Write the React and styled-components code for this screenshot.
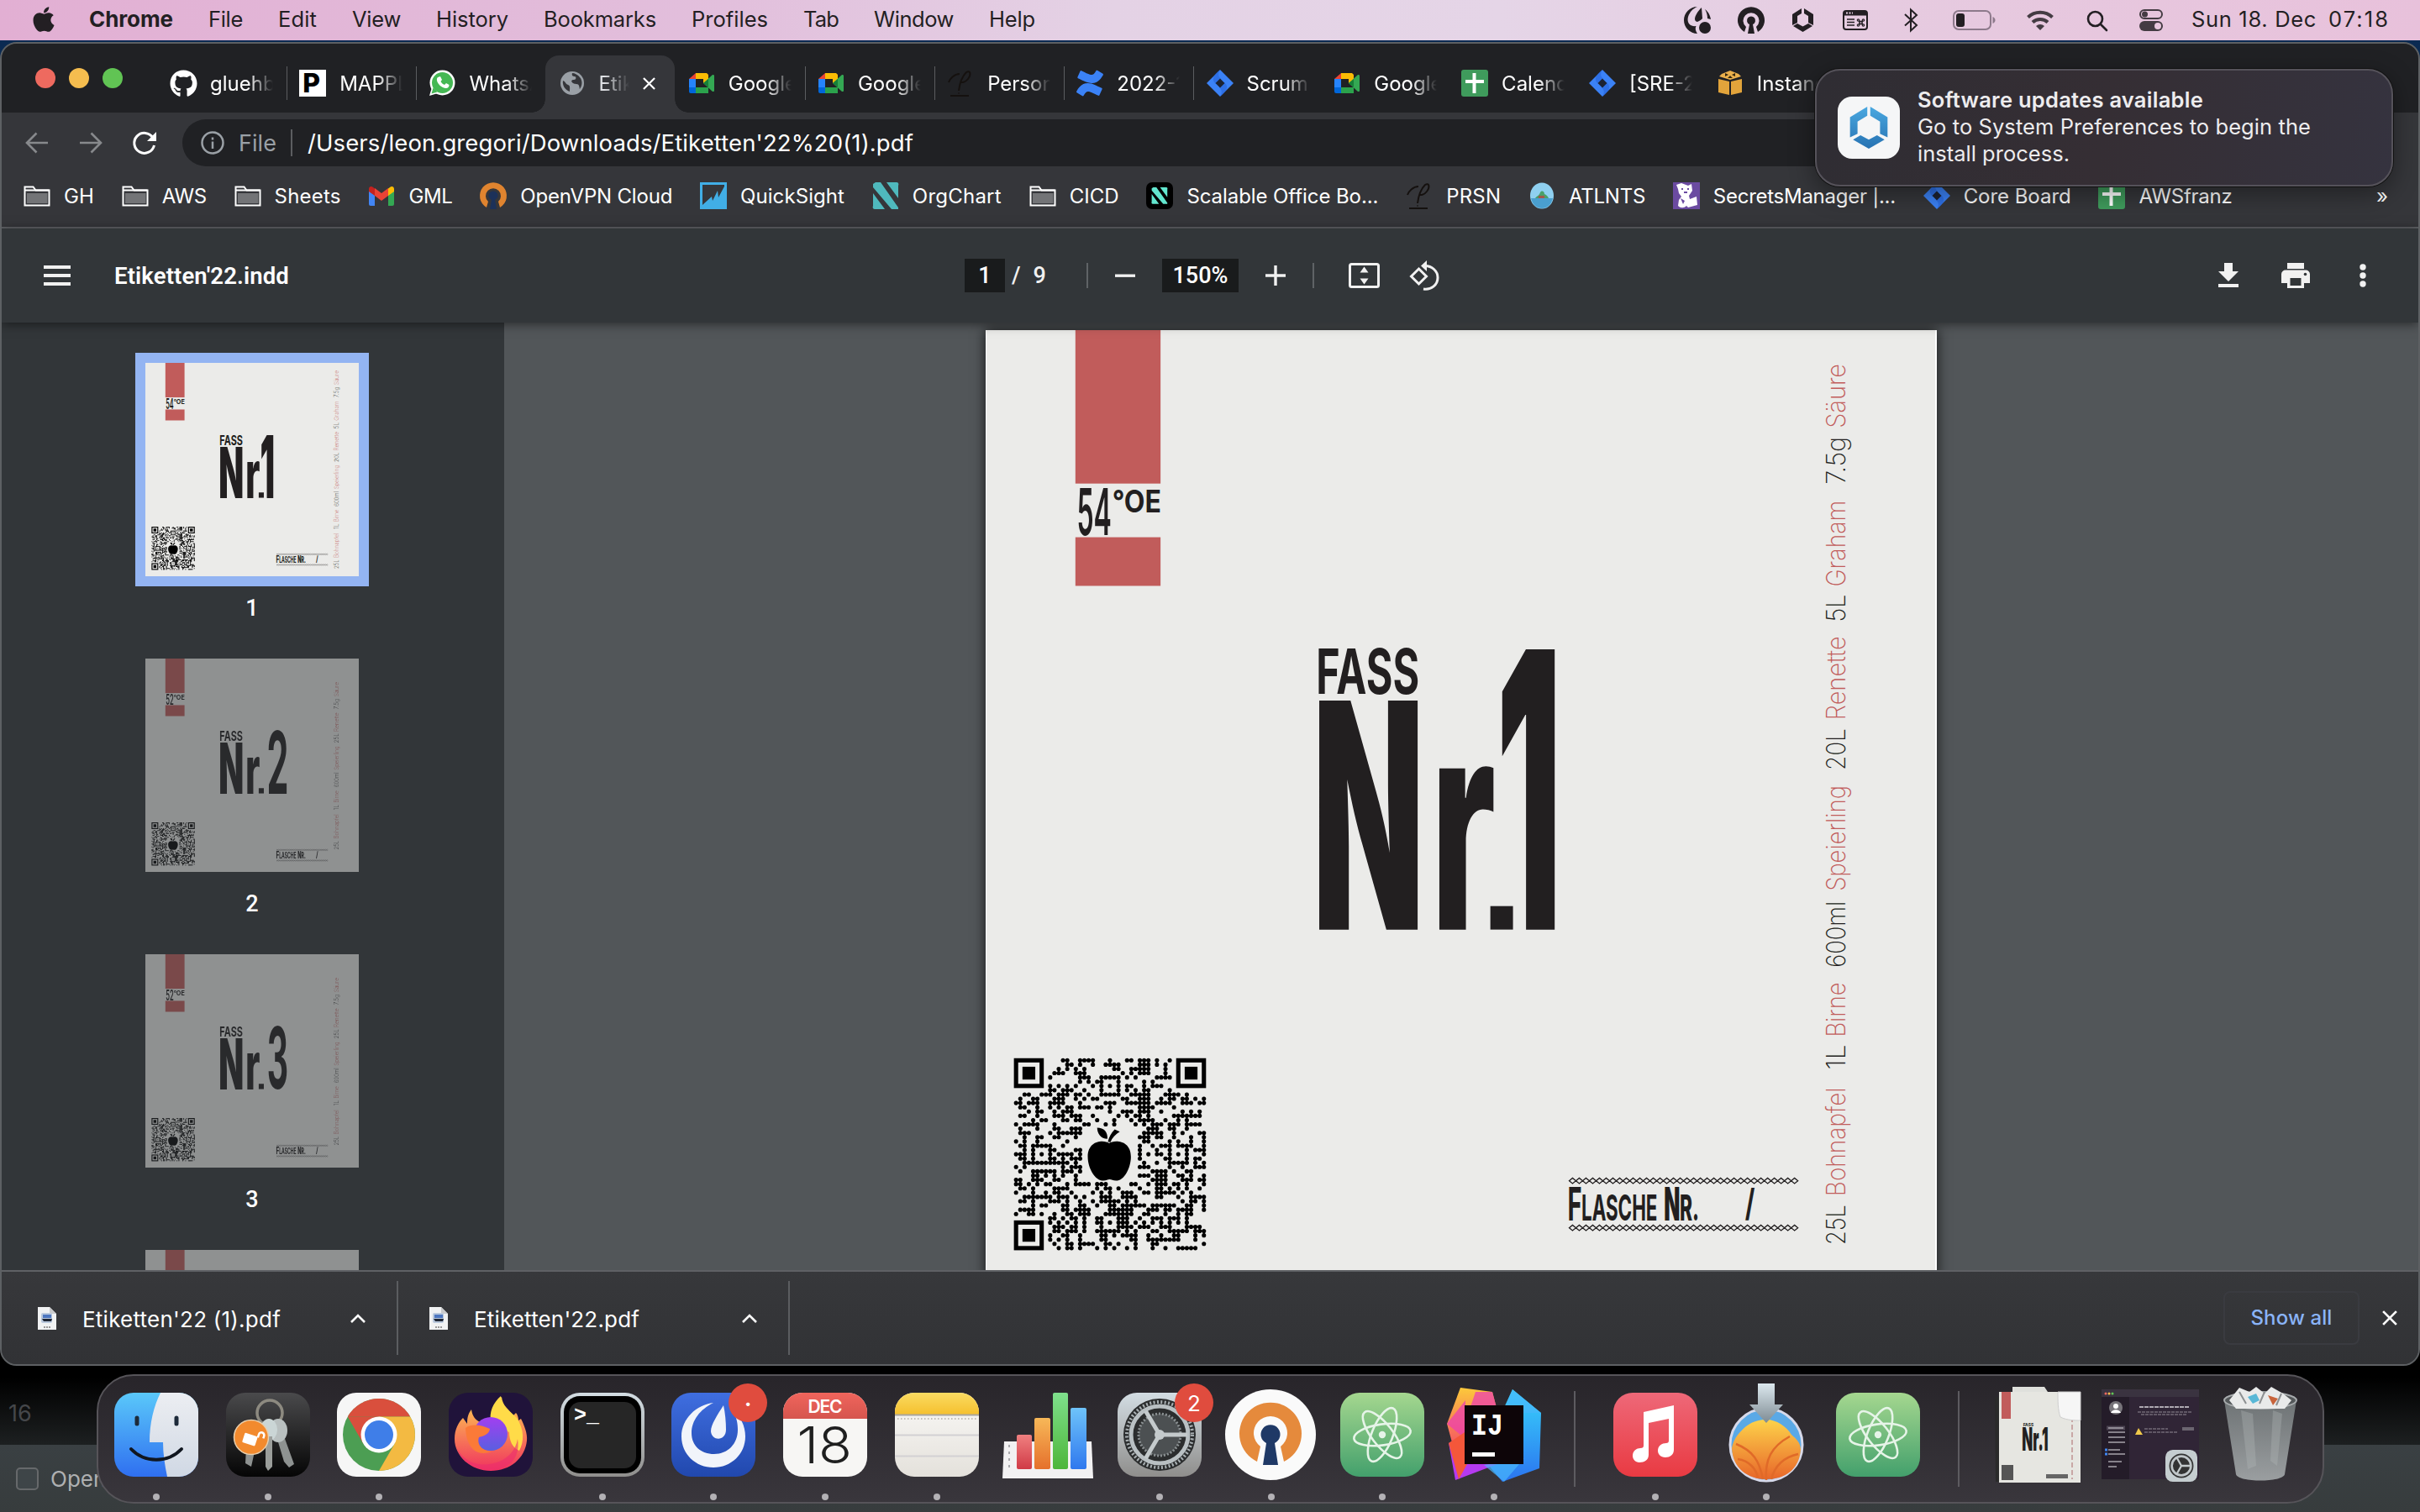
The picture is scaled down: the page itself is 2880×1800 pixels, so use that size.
import React from "react";
import styled, { createGlobalStyle } from "styled-components";
import { FaApple, FaGithub, FaConfluence } from "react-icons/fa";

const UI = 'Inter, "Liberation Sans", sans-serif';
const PDF = 'Roboto, "Liberation Sans", sans-serif';

const Global = createGlobalStyle`
  html, body { margin: 0; padding: 0; background: #000; }
  body { font-family: ${UI}; overflow: hidden; }
  * { box-sizing: border-box; }
  svg { display: block; overflow: visible; }
`;

/* ---------- text measuring ---------- */
const ctx = document.createElement("canvas").getContext("2d");
const measure = (text, weight, size, family) => {
  ctx.font = `${weight} ${size}px ${family}`;
  return ctx.measureText(text);
};

const Span = styled.span`
  display: inline-block;
  flex: none;
  white-space: pre;
  font-family: ${(p) => p.$family};
  font-size: ${(p) => p.$size}px;
  font-weight: ${(p) => p.$weight};
  color: ${(p) => p.$color};
`;

function Fit({ w, size = 26, weight = 400, family = UI, color = "inherit", children }) {
  const natural = measure(children, weight, size, family).width;
  const spacing = w ? (w - natural) / children.length : 0;
  return (
    <Span $size={size} $weight={weight} $family={family} $color={color} style={{ letterSpacing: spacing }}>
      {children}
    </Span>
  );
}

/* Text stretched so that its ink fills the given box. */
function Ink({ t, x, y, w, h, weight = 900, fill = "#221f20", family = UI }) {
  const m = measure(t, weight, 200, family);
  const l = m.actualBoundingBoxLeft;
  const a = m.actualBoundingBoxAscent;
  const sx = w / (l + m.actualBoundingBoxRight);
  const sy = h / (a + m.actualBoundingBoxDescent);
  return (
    <text
      transform={`translate(${x + l * sx} ${y + a * sy}) scale(${sx} ${sy})`}
      fontFamily={family}
      fontSize="200"
      fontWeight={weight}
      fill={fill}
    >
      {t}
    </text>
  );
}

/* ---------- label artwork ---------- */
const QR = `11-12 15-18 22 26-27 29-31 33 36
12-13 15 18 21-24 29-31 33 35
10 12 14 16 23-24 27-31 35
9-11 14-16 25 27 29-31 35
8 15-17 20-24 26 28 33-36
15 17 19-20 24 30 32
8 10 12 14 18 20 22 24 26-27 30 32-34
8-9 11-13 16 20 24 26 28 30-31 36
2-3 6-8 10-12 14-15 17 20-24 27-31 35-38 40
1 4-5 9-11 14 16 18-19 25-26 29-31 34 36-37 39-40 42 44
0-1 3-5 8-11 15 21-23 26-31 33-36 39-41 43-44
1-2 5 8 10 12-13 15-17 19-20 22 29-32 37
3 5-6 9 11-13 22 25-27 29-31 34 39 41 43
1-2 5 9-11 13-15 18 24 26 28-29 31 37-43
4 6-7 11-12 14-15 19 23 27 29-32 35 38 40
0 2-5 9 16-17 21 23 28 30 32-34 36-38 40-43
1 5 9-10 13-15 31-33 36-37 40
1-3 8 10-15 30-34 37 39 43-44
2 5-6 9-10 14 29-31 33-34 37 41 44
0 2 5 12 30-31 36 38 41 44
1-2 4-8 11 29 32 34-36 38-41 44
2 4 8-9 14-15 29 33 36 40 42-44
0-2 4 6 8 10-13 15 29 31 33-34 36 38 40 44
1-2 4 8-9 11 13-15 29 35-36 40 42-43
2-12 14 30 33 36-40 42 44
0 2 11 13-15 29-31 36 39 42-44
1 4-9 11-13 15 32-35 37 40-41
4-5 7 9 11 14 29-31 33-35 38-39 41 44
0-1 4-6 9-10 14 32-35 39-41 43-44
0-1 3 5 7-8 12 14-17 19-21 27-28 31 33-35 37-38 40 44
1-2 4 9-12 19 21-22 24 29 33-34 36 38 40 43
0 4 7 9-10 13 18 20 22 25-27 30-31 33-37 39 41
2-8 10-12 14 16 20-22 25-28 33-34 38 41-44
1-2 4 8-10 12 15 18 20-24 26 28 39 41-42 44
4 6-7 11-12 15-16 19 22-23 25-30 32-37 40-41 44
1-4 11-12 14-17 22-27 31-33 35-36 38-41 44
0 3-4 6 9 12-13 15-17 21-27 30-31 35 38 40-41
8-9 11 13-14 16 19-20 24-26 29 32-34 36-38 40
8 10 12 14 16 19-20 22 24-26 28 30 32 34 36 38 40
9-11 13-14 16 20 24-27 29-31 34-36 40-43
9-10 12-14 16 19-24 26 28 32-33 36-40 42-44
8 11-12 15 20-21 23 25-28 31 34 37-38 42 44
8 10 12 15 20-21 27-28 31-38 42
9 12-13 15-18 21-22 24 28 32-33 44
10 12-13 15 19 21 23 26 28 32 35 38-42`
  .split("\n")
  .map((row) =>
    row.split(" ").flatMap((r) => {
      const [a, b = a] = r.split("-").map(Number);
      return Array.from({ length: b - a + 1 }, (_, i) => a + i);
    })
  );

function QrCode() {
  return (
    <g transform="translate(32 867.4) scale(5.09)">
      {QR.map((cols, r) => (
        <React.Fragment key={r}>
          {cols.map((c) => (
            <circle key={c} cx={c + 0.5} cy={r + 0.5} r="0.5" />
          ))}
          {cols.filter((c) => cols.includes(c + 1)).map((c) => (
            <rect key={`h${c}`} x={c + 0.5} y={r + 0.32} width="1" height="0.36" />
          ))}
          {cols.filter((c) => QR[r + 1] && QR[r + 1].includes(c)).map((c) => (
            <rect key={`v${c}`} x={c + 0.32} y={r + 0.5} width="0.36" height="1" />
          ))}
        </React.Fragment>
      ))}
      {[[0, 0], [38, 0], [0, 38]].map(([x, y]) => (
        <g key={`${x}-${y}`}>
          <rect x={x + 0.5} y={y + 0.5} width="6" height="6" fill="none" stroke="#000" />
          <rect x={x + 2} y={y + 2} width="3" height="3" />
        </g>
      ))}
      <path d="M22.3 19.9c-1-.8-5-.9-5 3.2 0 2.500 1.600 5.600 3.700 5.600.7 0 .9-.3 1.400-.3s.8.300 1.500.300c2 0 3.500-3.100 3.500-5.600 0-4.100-4-4-5.100-3.200zM22 19.600c.3-1.200.8-2 1.600-2.900l1.200.5c-1 .6-1.800 1.400-2.200 2.500zM21.900 18.900c-1.500 0-2.400-1.200-2.400-2.600 1.600 0 2.500 1 2.400 2.600z" />
    </g>
  );
}

const BATCHES = {
  1: {
    oe: "54",
    box: [613.5, 64],
    words: [["25L", 1090, 1042], ["Bohnapfel", 1032, 902], ["1L", 881, 851], ["Birne", 842, 777], ["600ml", 759, 680], ["Speierling", 668, 542], ["20L", 524, 474], ["Renette", 464, 364], ["5L", 347, 314], ["Graham", 305, 202], ["7.5g", 183, 126], ["Säure", 116, 39]],
  },
  2: {
    oe: "52",
    box: [652, 97],
    words: [["25L", 1012, 964], ["Bohnapfel", 954, 824], ["1L", 803, 773], ["Birne", 764, 699], ["600ml", 681, 602], ["Speierling", 590, 464], ["25L", 446, 396], ["Renette", 386, 286], ["7.5g", 268, 211], ["Säure", 201, 124]],
  },
};
BATCHES[3] = BATCHES[2];
BATCHES[4] = BATCHES[2];

function Chain({ y }) {
  const d = Array.from({ length: 34 }, (_, i) => `M${694 + i * 8.02} ${y}l4-3.300 4 3.300-4 3.300z`).join("");
  return <path d={d} fill="none" stroke="#221f20" strokeWidth="1.300" />;
}

function Label({ nr }) {
  const b = BATCHES[nr];
  return (
    <svg viewBox="0 0 1131 1131" width="100%">
      <rect width="1131" height="1131" fill="#ebebe9" />
      <rect x="106" width="101.500" height="183" fill="#c15c5b" />
      <rect x="106" y="247" width="101.500" height="58" fill="#c15c5b" />
      <g transform="translate(0.7 0.9)">
        <Ink t={b.oe} x={109} y={187} w={38} h={57} weight={600} />
        <Ink t="°OE" x={151} y={189.500} w={55} h={27} weight={700} />
        <Ink t="FASS" x={395.500} y={379} w={118} h={55} weight={700} />
        <Ink t="N" x={395.700} y={440} w={118} h={274} />
        <Ink t="r" x={539} y={518.500} w={65} h={195.500} weight={800} />
        <rect x="600" y="686" width="27" height="28" fill="#221f20" />
        <Ink t={String(nr)} x={b.box[0]} y={378.700} w={b.box[1]} h={335.300} weight={nr === 1 ? 900 : 700} />
        <QrCode />
        <Chain y={1013.600} />
        <Chain y={1069.700} />
        <Ink t="F" x={694} y={1021} w={14} h={40} weight={700} />
        <Ink t="LASCHE" x={710} y={1029} w={88} h={32} weight={700} />
        <Ink t="N" x={808} y={1021} w={17} h={40} />
        <Ink t="R." x={827} y={1029} w={20} h={32} weight={800} />
        <Ink t="/" x={904} y={1022} w={11} h={39} weight={700} />
      </g>
      <g transform="rotate(-90)" fontFamily={UI} fontSize="31.200" fontWeight="250">
        {b.words.map(([word, from, to], i) => (
          <text
            key={i}
            x={-from - 1}
            y="1023.500"
            textLength={from - to}
            lengthAdjust="spacingAndGlyphs"
            fill={i % 2 ? "#c15c5b" : "#221f20"}
          >
            {word}
          </text>
        ))}
      </g>
    </svg>
  );
}

/* ---------- desktop ---------- */
const Screen = styled.div`
  position: relative;
  width: 2880px;
  height: 1800px;
  overflow: hidden;
  display: flex;
  flex-direction: column;
  background: linear-gradient(#0b2a52 0, #0b2a52 80px, #000 90px, #000 1640px, #1d2021 1720px, #3a4043 1720px, #373c3d 100%);
  color: #fff;
`;

const Behind = styled.div`
  position: absolute;
  left: 0;
  bottom: 0;
  width: 116px;
  height: 160px;
  padding: 26px 0 0 10px;
  display: flex;
  flex-direction: column;
  justify-content: space-between;
  color: #45474a;
`;

const BehindRow = styled.div`
  display: flex;
  align-items: center;
  gap: 14px;
  height: 80px;
  padding-left: 9px;
  color: #aeb0b1;
`;

const Checkbox = styled.div`
  width: 27px;
  height: 27px;
  flex: none;
  border: 2px solid #66696b;
  border-radius: 5px;
  background: #3e4548;
`;

const MenuBar = styled.div`
  height: 48px;
  flex: none;
  display: flex;
  align-items: center;
  padding: 0 37px 0 39px;
  color: #231f23;
  background: linear-gradient(90deg, #e2afd3, #e2bfdc 30%, #e4d2e5 46%, #e5d5e7 62%, #e6cbe0 78%, #e8c1db);
`;

const Menus = styled.div`
  display: flex;
  align-items: center;
  gap: 42px;
  flex: 1;
  padding-bottom: 3px;
`;

const Status = styled.div`
  display: flex;
  align-items: center;
  width: ${(p) => p.$w}px;
  margin-left: ${(p) => p.$ml || 0}px;
  padding-bottom: ${(p) => (p.$text ? 3 : 0)}px;
`;

const MENUS = [["File", 41], ["Edit", 46], ["View", 58], ["History", 86], ["Bookmarks", 134], ["Profiles", 91], ["Tab", 42], ["Window", 95], ["Help", 55]];

function TopMenu() {
  return (
    <MenuBar>
      <Menus>
        <svg width="25" height="34" viewBox="0 0 25 34"><FaApple size={34} x={-4} y={0} /></svg>
        <Fit w={100} weight={700}>Chrome</Fit>
        {MENUS.map(([t, w]) => <Fit key={t} w={w} size={25.5}>{t}</Fit>)}
      </Menus>
      <Status $w={32}>
        <svg width="32" height="32" viewBox="0 0 32 32" fill="#231f23">
          <path d="M16 0A16 16 0 0 0 16 32c-2-3-3-6-1.500-9C8 24 3 20 5 12 7 6 11 2 16 0zM21 1c-5 5-8 10-8 14 0 2 2 3 3 3 3-1 5-3 6-4zM25 3c4 3 6 7 7 12l-4-1c0-4-1-8-3-11z" />
          <circle cx="25" cy="25" r="7" />
        </svg>
      </Status>
      <Status $w={32} $ml={32}>
        <svg width="32" height="32" viewBox="0 0 32 32" fill="#231f23">
          <path d="M8 30A16 16 0 1 1 24 30L22 24A9.500 9.500 0 1 0 10 24z" />
          <path d="M12 32l2-11a5 5 0 1 1 4 0l2 11z" />
        </svg>
      </Status>
      <Status $w={25} $ml={33}>
        <svg width="25" height="28" viewBox="0 0 25 28" fill="#231f23">
          <path d="M0 7L11 0v6L6 9v8l-6 3zM14 0l11 7v13l-6-3V9l-5-3zM1 21l5-3 6.500 3.500L19 18l5 3-11.500 7z" />
        </svg>
      </Status>
      <Status $w={30} $ml={35}>
        <svg width="30" height="24" viewBox="0 0 30 24" fill="none" stroke="#231f23" strokeWidth="2">
          <rect x="1" y="1" width="28" height="22" rx="3" />
          <path d="M1 4h28" strokeWidth="5" />
          <path d="M4 3.500h8" stroke="#e6cfe2" strokeDasharray="2 1.500" />
          <path d="M5 11h9M5 14.500h9M5 18h9" strokeWidth="1.600" />
          <path d="M20 12.500v5M23 12.500v5M19 13.500h5M19 16.500h5" strokeWidth="1.500" />
          <circle cx="18.500" cy="12" r="1.200" strokeWidth="1.200" /><circle cx="24.500" cy="12" r="1.200" strokeWidth="1.200" />
          <circle cx="18.500" cy="18" r="1.200" strokeWidth="1.200" /><circle cx="24.500" cy="18" r="1.200" strokeWidth="1.200" />
        </svg>
      </Status>
      <Status $w={17} $ml={43}>
        <svg width="17" height="28" viewBox="0 0 17 28" fill="none" stroke="#231f23" strokeWidth="2">
          <path d="M1 7l14 13-7 6.500V1.500L15 8 1 20.500" />
        </svg>
      </Status>
      <Status $w={51} $ml={41}>
        <svg width="51" height="24" viewBox="0 0 51 24">
          <rect x="1" y="1" width="44" height="22" rx="6" fill="none" stroke="#8d7a8b" strokeWidth="2" />
          <rect x="4" y="4" width="10" height="16" rx="3" fill="#231f23" />
          <path d="M47.500 8c4 1.500 4 6.500 0 8z" fill="#8d7a8b" />
        </svg>
      </Status>
      <Status $w={32} $ml={37}>
        <svg width="32" height="24" viewBox="0 0 32 24" fill="none" stroke="#443c43" strokeWidth="4">
          <path d="M1.500 8.500a21 21 0 0 1 29 0M7 14.500a13 13 0 0 1 18 0" />
          <path d="M16 24l-5-5a7.500 7.500 0 0 1 10 0z" fill="#443c43" stroke="none" />
        </svg>
      </Status>
      <Status $w={25} $ml={39}>
        <svg width="25" height="25" viewBox="0 0 25 25" fill="none" stroke="#231f23" strokeWidth="2.600">
          <circle cx="10.500" cy="10.500" r="8.500" /><path d="M17 17l7 7" strokeLinecap="round" />
        </svg>
      </Status>
      <Status $w={28} $ml={38}>
        <svg width="28" height="26" viewBox="0 0 28 26" fill="none" stroke="#443c43" strokeWidth="2">
          <rect x="1" y="1" width="26" height="10" rx="5" /><circle cx="6.500" cy="6" r="3.500" fill="#443c43" stroke="none" />
          <rect x="0" y="14" width="28" height="12" rx="6" fill="#443c43" stroke="none" /><circle cx="22" cy="20" r="4" fill="#e8c8de" stroke="none" />
        </svg>
      </Status>
      <Status $text $w={148} $ml={34}><Fit w={149} size={25.5}>Sun 18. Dec</Fit></Status>
      <Status $text $w={72} $ml={15}><Fit w={73} size={25.5}>07:18</Fit></Status>
    </MenuBar>
  );
}

/* ---------- chrome window ---------- */
const Window = styled.div`
  margin-top: 2px;
  height: 1576px;
  flex: none;
  display: flex;
  flex-direction: column;
  border: 2px solid #5d6063;
  border-radius: 20px;
  overflow: hidden;
  background: #35363a;
`;

const TabStrip = styled.div`
  height: 82px;
  flex: none;
  display: flex;
  align-items: flex-end;
  padding-left: 40px;
  background: #202124;
`;

const Lights = styled.div`
  width: 144px;
  height: 82px;
  display: flex;
  align-items: center;
  gap: 16px;
`;

const Light = styled.i`
  width: 24px;
  height: 24px;
  border-radius: 50%;
  background: ${(p) => p.$c};
`;

const Tab = styled.div`
  position: relative;
  width: ${(p) => p.$w}px;
  height: 68px;
  flex: none;
  display: flex;
  align-items: center;
  gap: 16px;
  padding: 0 14px 2px 16px;
  border-radius: 16px 16px 0 0;
  background: ${(p) => (p.$active ? "#35363a" : "transparent")};
  color: ${(p) => (p.$active ? "#dfe1e5" : "#fff")};
  &::before, &::after {
    content: "";
    display: ${(p) => (p.$active ? "block" : "none")};
    position: absolute;
    bottom: 0;
    width: 16px;
    height: 16px;
  }
  &::before { left: -16px; background: radial-gradient(circle at 0 0, transparent 15.500px, #35363a 16px); }
  &::after { right: -16px; background: radial-gradient(circle at 100% 0, transparent 15.500px, #35363a 16px); }
`;

const TabTitle = styled.div`
  width: ${(p) => p.$w}px;
  flex: none;
  overflow: hidden;
  mask-image: linear-gradient(90deg, #000 ${(p) => p.$w - 30}px, transparent);
`;

const TabLine = styled.i`
  width: 2px;
  height: 40px;
  margin-left: auto;
  margin-right: -15px;
  background: ${(p) => (p.$hidden ? "transparent" : "#5b5d60")};
`;

const IconBox = styled.div`
  width: 32px;
  height: 32px;
  flex: none;
  display: flex;
  align-items: center;
  justify-content: center;
`;

const Meet = () => (
  <svg width="30" height="24" viewBox="0 0 30 24">
    <path d="M0 7l8-7v7z" fill="#ea4335" /><path d="M8 0h13v7H8z" fill="#fbbc04" /><path d="M0 7h8v10H0z" fill="#2684fc" />
    <path d="M0 17h8v7H2a2 2 0 0 1-2-2z" fill="#0066da" /><path d="M8 17h15v7H8z" fill="#2ba24c" />
    <path d="M21 0l2 2v10l-6 0V7h4z" fill="#fbbc04" /><path d="M17 12l11-10c1 0 2 0 2 1v18c0 1-1 1-2 1z" fill="#34a853" />
    <path d="M17 12l6-5v10z" fill="#188038" />
  </svg>
);
const Jira = () => (
  <svg width="32" height="32" viewBox="0 0 32 32">
    <path d="M16 0l16 16-16 16L0 16z" fill="#3b82f6" /><path d="M16 0c-3 5-2 8 1 11l-6 6C5 12 8 6 16 0zM16 32c3-5 2-8-1-11l6-6c6 5 3 11-5 17z" fill="#2563d9" opacity=".55" />
    <path d="M16 10.500l5.500 5.500-5.500 5.500-5.500-5.500z" fill="#1c2333" />
  </svg>
);
const Sheet = () => (
  <svg width="32" height="32" viewBox="0 0 32 32">
    <rect width="32" height="32" rx="3" fill="#3f9b5c" /><path d="M13.500 4h4v24h-4zM5 12h22v4H5z" fill="#fff" />
  </svg>
);
const Script = () => (
  <svg width="30" height="32" viewBox="0 0 30 32" fill="none" stroke="#15110f" strokeWidth="2">
    <path d="M13 25c1-8 4-17 9-22 5-3 6 3 2 8-3 4-8 5-9 3M14 5C8 5 2 11 1 15" /><path d="M3 31h22M13 27.500v1" />
  </svg>
);
const Globe = () => (
  <svg width="28" height="28" viewBox="0 0 28 28">
    <circle cx="14" cy="14" r="14" fill="#9aa0a6" />
    <path d="M3 11c3 1 3 4 6 5s2 4 2 8c-6-2-9-8-8-13zM14 2c-1 3 1 4 3 4s2 4-1 4-4 2-1 4 6 0 7 3 1 4 0 5c5-5 4-12 1-15-2-3-6-5-9-5z" fill="#35363a" />
  </svg>
);
const Amazon = () => (
  <svg width="28" height="30" viewBox="0 0 28 30">
    <path d="M0 10l13 3v16L0 26zM28 10l-13 3v16l13-3z" fill="#e2a43b" /><path d="M14 0l10 4 3 3-13 4L1 7l3-3z" fill="#eab04c" /><path d="M8 3l4 2-4 2zM20 3l-4 2 4 2zM14 6l3 3h-6z" fill="#33250d" />
  </svg>
);
const PBox = () => (
  <svg width="32" height="32" viewBox="0 0 32 32">
    <rect width="32" height="32" fill="#fff" />
    <Ink t="P" x={6} y={4} w={18} h={23} weight={800} fill="#000" />
  </svg>
);
const WhatsApp = () => (
  <svg width="32" height="32" viewBox="0 0 32 32">
    <circle cx="16.500" cy="15.500" r="15" fill="#fff" /><path d="M1 31l3-10 7 7z" fill="#fff" />
    <circle cx="16.500" cy="15.500" r="12.500" fill="#45b854" /><path d="M3.500 28.500l2-7 5 5z" fill="#45b854" />
    <path d="M11 9l3-1 2 4-1.500 2c1 2 2.500 3 4.500 4l2-2 3.500 2c0 3-2 4.500-4.500 4-5-1-9-5-10-9-.3-1.500 0-3 1-4z" fill="#fff" />
  </svg>
);

const TABS = [
  [<FaGithub size={33} />, "gluehbirne"],
  [<PBox />, "MAPPLE"],
  [<WhatsApp />, "WhatsApp"],
  [<Globe />, "Etiketten"],
  [<Meet />, "Google"],
  [<Meet />, "Google"],
  [<Script />, "Personio"],
  [<FaConfluence size={32} color="#3b82f6" />, "2022-12"],
  [<Jira />, "Scrum B"],
  [<Meet />, "Google"],
  [<Sheet />, "Calendar"],
  [<Jira />, "[SRE-24"],
  [<Amazon />, "Instances"],
];

const AddressRow = styled.div`
  height: 72px;
  flex: none;
  display: flex;
  align-items: center;
  padding: 0 118px 0 28px;
`;

const NavIcon = styled.div`
  width: 28px;
  margin-right: ${(p) => p.$mr}px;
`;

const Omnibox = styled.div`
  flex: 1;
  height: 56px;
  display: flex;
  align-items: center;
  padding-left: 22px;
  border-radius: 28px;
  background: #202124;
  color: #9aa0a6;
`;

const OmniLine = styled.i`
  width: 2px;
  height: 32px;
  margin: 0 18px 0 17px;
  background: #5b5d60;
`;

const Bookmarks = styled.div`
  height: 66px;
  flex: none;
  display: flex;
  align-items: center;
  gap: 32.8px;
  padding: 0 36px 10px 26px;
  border-bottom: 2px solid #5f6165;
`;

const Bookmark = styled.div`
  display: flex;
  align-items: center;
  gap: 16px;
  flex: none;
`;

const More = styled.div`
  margin-left: auto;
`;

const Folder = () => (
  <svg width="32" height="25" viewBox="0 0 32 25">
    <path d="M1.500 1.500h10l3 4h16v18h-29z" fill="#35363a" stroke="#fff" strokeWidth="2" /><path d="M4 9h24.500v12H4z" fill="#737477" />
    <path d="M1.500 5.500h29" stroke="#fff" strokeWidth="2" />
  </svg>
);
const Gmail = () => (
  <svg width="30" height="23" viewBox="0 0 30 23">
    <path d="M0 3v18a2 2 0 0 0 2 2h5V8z" fill="#4285f4" /><path d="M30 3v18a2 2 0 0 1-2 2h-5V8z" fill="#34a853" />
    <path d="M7 2v9l8 6 8-6V2l-8 6z" fill="#ea4335" /><path d="M0 3c0-3 3-4 5-2l2 1.500V11L0 6z" fill="#c5221f" /><path d="M30 3c0-3-3-4-5-2l-2 1.500V11l7-5z" fill="#fbbc04" />
  </svg>
);
const Vpn = () => (
  <svg width="32" height="32" viewBox="0 0 32 32">
    <path d="M8 30A16 16 0 1 1 24 30L22 23A9 9 0 1 0 10 23z" fill="#e0842f" /><path d="M12 32l2-11a5.500 5.500 0 1 1 4 0l2 11z" fill="#1c3159" />
  </svg>
);
const SFlag = ({ dark }) => (
  <svg width="32" height="32" viewBox="0 0 32 32">
    {dark && <rect width="32" height="32" rx="7" fill="#000" />}
    <g fill={dark ? "#62e6cf" : "#4fb9bd"} transform={dark ? "translate(6 6) scale(.62)" : undefined}>
      <path d="M4 0h6l21 30v2h-8L1 6V2zM17 0h12c2 0 3 2 2 4v15zM1 13l14 19H3c-2 0-3-2-2-4z" />
    </g>
  </svg>
);
const Quick = () => (
  <svg width="32" height="32" viewBox="0 0 32 32">
    <rect width="32" height="32" fill="#41aee6" />
    <path d="M3 3h26v2L22 18l-1-8-6 12-1-5L3 27z" fill="#35363a" />
  </svg>
);
const Island = () => (
  <svg width="30" height="32" viewBox="0 0 30 32">
    <ellipse cx="15" cy="16" rx="14" ry="15.500" fill="#8fd0f0" /><path d="M2 19h26c-2 9-8 12-13 12S4 28 2 19z" fill="#4a9fcf" /><path d="M7 19c2-3 5-3 6-7 2-3 5-1 5 2 3 1 4 3 5 5z" fill="#4aa06a" /><path d="M11 16h7v3h-7z" fill="#a2574b" />
  </svg>
);
const Dog = () => (
  <svg width="32" height="32" viewBox="0 0 32 32">
    <rect width="32" height="32" fill="#6b4ba1" />
    <path d="M4 3l6-2 8 3 4-2 1 8-4 6 1 4 8-3 1 10-11 3-2-2c-3 3-7 3-10 0l1-7 3-4-3-4-1-5z" fill="#fff" />
    <path d="M10 7h2v2h-2zM17 7h2v2h-2zM13 11h4v2h-4zM9 19l5 3-2 4z" fill="#6b4ba1" />
  </svg>
);

const BOOKMARKS = [
  [<Folder />, "GH", 36], [<Folder />, "AWS", 53], [<Folder />, "Sheets", 79], [<Gmail />, "GML", 52], [<Vpn />, "OpenVPN Cloud", 181],
  [<Quick />, "QuickSight", 124], [<SFlag />, "OrgChart", 106], [<Folder />, "CICD", 59], [<SFlag dark />, "Scalable Office Bo...", 228], [<Script />, "PRSN", 65],
  [<Island />, "ATLNTS", 91], [<Dog />, "SecretsManager |...", 217], [<Jira />, "Core Board", 128], [<Sheet />, "AWSfranz", 111],
];

/* ---------- pdf viewer ---------- */
const PdfBar = styled.div`
  position: relative;
  z-index: 1;
  height: 112px;
  flex: none;
  display: flex;
  align-items: center;
  padding: 0 62px 0 50px;
  background: #323639;
  color: #f1f1f1;
  box-shadow: 0 2px 12px rgba(0, 0, 0, 0.5);
`;

const PdfSide = styled.div`
  width: ${(p) => p.$w}px;
  display: flex;
  align-items: center;
`;

const Gap = styled.i`
  width: ${(p) => p.$w}px;
  flex: none;
`;

const Fill = styled.i`
  flex: 1;
`;

const Field = styled.div`
  width: ${(p) => p.$w}px;
  height: 40px;
  flex: none;
  display: flex;
  align-items: center;
  justify-content: center;
  background: #191b1c;
  color: #fff;
`;

const BarLine = styled.i`
  width: 2px;
  height: 30px;
  flex: none;
  background: #5f6366;
`;

const PdfBody = styled.div`
  flex: 1;
  min-height: 0;
  display: flex;
`;

const Sidebar = styled.div`
  width: 598px;
  flex: none;
  overflow: hidden;
  padding: 48px 0 0 171px;
  background: #323639;
`;

const ThumbCell = styled.div`
  width: 254px;
  height: 352px;
  display: flex;
  flex-direction: column;
  align-items: center;
  gap: 22px;
  font: 500 27px ${PDF};
`;

const Thumb = styled.div`
  width: 254px;
  height: 254px;
  flex: none;
  box-shadow: ${(p) => (p.$active ? "0 0 0 12px #93b4f2" : "none")};
  & > svg { opacity: ${(p) => (p.$active ? 1 : 0.5)}; }
`;

const Viewer = styled.div`
  flex: 1;
  overflow: hidden;
  display: flex;
  justify-content: center;
  align-items: flex-start;
  padding-top: 9px;
  background: #525659;
`;

const Page = styled.div`
  width: 1132px;
  flex: none;
  border: solid #fff;
  border-width: 0 2px 0 1px;
  box-shadow: 0 0 14px rgba(0, 0, 0, 0.75);
`;

const Downloads = styled.div`
  height: 112px;
  flex: none;
  display: flex;
  align-items: center;
  border-top: 2px solid #5f6165;
  background: linear-gradient(#37383b, #313235);
`;

const Download = styled.div`
  width: ${(p) => p.$w}px;
  height: 88px;
  display: flex;
  align-items: center;
  padding: 0 37px 0 ${(p) => p.$pl}px;
  border-right: 2px solid #5b5d60;
`;

const DownloadName = styled.div`
  flex: 1;
  padding: 2px 0 0 31px;
`;

const ShowAll = styled.div`
  width: 162px;
  height: 64px;
  margin: 0 27px 0 auto;
  padding-bottom: 2px;
  display: flex;
  align-items: center;
  justify-content: center;
  border: 2px solid #3a3b40;
  border-radius: 8px;
`;

const CloseBox = styled.div`
  width: 18px;
  margin-right: 25px;
`;

const PdfFile = () => (
  <svg width="22" height="28" viewBox="0 0 22 28">
    <path d="M0 1h14l8 8v19H0z" fill="#f1f2f3" /><path d="M14 1v8h8z" fill="#c9cacc" />
    <rect x="4" y="8" width="13" height="12" rx="2" fill="#b9c8dd" /><path d="M6 10h10v4H6z" fill="#4d76c0" /><path d="M5 15h12l-1 3H7z" fill="#1d2433" />
    <path d="M7 25h8" stroke="#999" strokeWidth="2" strokeDasharray="2 1" />
  </svg>
);
const Caret = () => (
  <svg width="18" height="11" viewBox="0 0 18 11" fill="none" stroke="#fff" strokeWidth="2.600"><path d="M1 10l8-8 8 8" /></svg>
);
const Cross = ({ s = 16 }) => (
  <svg width={s} height={s} viewBox="0 0 16 16" fill="none" stroke="#fff" strokeWidth="2.400"><path d="M1 1l14 14M15 1L1 15" /></svg>
);

function PdfToolbar() {
  return (
    <PdfBar>
      <PdfSide $w={1096}>
        <svg width="32" height="24" viewBox="0 0 32 24" fill="#f1f1f1"><path d="M0 0h32v4H0zM0 10h32v4H0zM0 20h32v4H0z" /></svg>
        <Gap $w={52} />
        <Fit w={208} size={27.5} weight={600} family={PDF} color="#fff">Etiketten'22.indd</Fit>
      </PdfSide>
      <Field $w={48}><Fit size={27} weight={500} family={PDF}>1</Fit></Field>
      <Gap $w={8} />
      <Fit size={27} weight={500} family={PDF}>/</Fit>
      <Gap $w={15} />
      <Fit size={27} weight={500} family={PDF}>9</Fit>
      <Gap $w={48} />
      <BarLine />
      <Gap $w={32} />
      <svg width="24" height="24" viewBox="0 0 24 24" fill="#f1f1f1"><path d="M0 10.500h24v3.400H0z" /></svg>
      <Gap $w={32} />
      <Field $w={91}><Fit w={66} size={27} weight={500} family={PDF}>150%</Fit></Field>
      <Gap $w={32} />
      <svg width="24" height="24" viewBox="0 0 24 24" fill="#f1f1f1"><path d="M0 10.300h24v3.400H0z M10.300 0h3.400v24h-3.400z" /></svg>
      <Gap $w={32} />
      <BarLine />
      <Gap $w={41} />
      <svg width="37" height="30" viewBox="0 0 37 30" fill="none" stroke="#f1f1f1" strokeWidth="3">
        <rect x="1.500" y="1.500" width="34" height="27" rx="2" /><path d="M18.500 4.500l5 7h-10zM18.500 25.500l5-7h-10z" fill="#f1f1f1" stroke="none" />
      </svg>
      <Gap $w={35} />
      <svg width="36" height="36" viewBox="0 0 36 36" fill="none" stroke="#f1f1f1" strokeWidth="3">
        <path d="M11.500 10L20.500 19l-9 9-9-9z" /><path d="M19 6.500c8 0 15 6 15 14 0 9-8 15-17 13.500" /><path d="M21 0v13l-7-6.500z" fill="#f1f1f1" stroke="none" />
      </svg>
      <Fill />
      <svg width="24" height="30" viewBox="0 0 24 30" fill="#f1f1f1"><path d="M7 0h10v10h7L12 22 0 10h7zM0 25h24v4H0z" /></svg>
      <Gap $w={51} />
      <svg width="34" height="30" viewBox="0 0 34 30" fill="#f1f1f1">
        <path d="M7 0h20v7H7zM5 8.500h24a5 5 0 0 1 5 5V24h-7v6H7v-6H0V13.500a5 5 0 0 1 5-5zM10.500 18v9h13v-9z" fillRule="evenodd" /><circle cx="28.500" cy="13.500" r="1.800" fill="#323639" />
      </svg>
      <Gap $w={59} />
      <svg width="8" height="28" viewBox="0 0 8 28" fill="#f1f1f1"><circle cx="4" cy="4" r="3.700" /><circle cx="4" cy="14" r="3.700" /><circle cx="4" cy="24" r="3.700" /></svg>
    </PdfBar>
  );
}

function ChromeWindow() {
  return (
    <Window>
      <TabStrip>
        <Lights><Light $c="#ee6a5f" /><Light $c="#f5bd4f" /><Light $c="#61c454" /></Lights>
        {TABS.map(([icon, title], i) => (
          <Tab key={i} $w={i < 8 ? 154.2 : 151.8} $active={i === 3}>
            <IconBox>{icon}</IconBox>
            <TabTitle $w={i === 3 ? 36 : 75}><Fit size={24}>{title}</Fit></TabTitle>
            {i === 3 && <Cross s={15} />}
            <TabLine $hidden={i === 2 || i === 3} />
          </Tab>
        ))}
      </TabStrip>
      <AddressRow>
        <NavIcon $mr={36}><svg width="28" height="26" viewBox="0 0 28 26" fill="none" stroke="#87898c" strokeWidth="2.600"><path d="M27 13H2M13.500 1.500L2 13l11.500 11.500" /></svg></NavIcon>
        <NavIcon $mr={36}><svg width="28" height="26" viewBox="0 0 28 26" fill="none" stroke="#87898c" strokeWidth="2.600"><path d="M1 13h25M14.500 1.500L26 13 14.500 24.500" /></svg></NavIcon>
        <NavIcon $mr={31}><svg width="28" height="28" viewBox="0 0 28 28" fill="none" stroke="#fff" strokeWidth="3"><path d="M24 8A12 12 0 1 0 25.500 17" /><path d="M28 1v11H17z" fill="#fff" stroke="none" /></svg></NavIcon>
        <Omnibox>
          <svg width="28" height="28" viewBox="0 0 28 28" fill="none" stroke="#9aa0a6" strokeWidth="2.500"><circle cx="14" cy="14" r="12.500" /><path d="M14 12.500V21M14 7.500v3" /></svg>
          <Gap $w={17} />
          <Fit w={45} size={27}>File</Fit>
          <OmniLine />
          <Fit w={721} size={27.5} color="#fff">/Users/leon.gregori/Downloads/Etiketten'22%20(1).pdf</Fit>
        </Omnibox>
      </AddressRow>
      <Bookmarks>
        {BOOKMARKS.map(([icon, t, w]) => (
          <Bookmark key={t}><IconBox>{icon}</IconBox><Fit w={w} size={24}>{t}</Fit></Bookmark>
        ))}
        <More><Fit size={24}>»</Fit></More>
      </Bookmarks>
      <PdfToolbar />
      <PdfBody>
        <Sidebar>
          {[1, 2, 3, 4].map((n) => (
            <ThumbCell key={n}><Thumb $active={n === 1}><Label nr={n} /></Thumb>{n}</ThumbCell>
          ))}
        </Sidebar>
        <Viewer><Page><Label nr={1} /></Page></Viewer>
      </PdfBody>
      <Downloads>
        <Download $w={472} $pl={43}><PdfFile /><DownloadName><Fit w={236} size={26}>Etiketten'22 (1).pdf</Fit></DownloadName><Caret /></Download>
        <Download $w={466} $pl={37}><PdfFile /><DownloadName><Fit w={197} size={26}>Etiketten'22.pdf</Fit></DownloadName><Caret /></Download>
        <ShowAll><Fit w={97} size={24} weight={500} color="#8ab4f8">Show all</Fit></ShowAll>
        <CloseBox><Cross s={18} /></CloseBox>
      </Downloads>
    </Window>
  );
}

/* ---------- notification ---------- */
const Notice = styled.div`
  position: absolute;
  left: 2160px;
  top: 82px;
  width: 688px;
  height: 140px;
  display: flex;
  align-items: center;
  gap: 21px;
  padding: 0 25px;
  border: 2px solid #55525a;
  border-radius: 30px;
  background: linear-gradient(100deg, #2f2d33, #352e34 50%, #35333f);
  box-shadow: 0 0 0 1px #111, 0 8px 30px rgba(0, 0, 0, 0.4);
`;

const NoticeIcon = styled.div`
  width: 74px;
  height: 74px;
  display: flex;
  align-items: center;
  justify-content: center;
  border-radius: 17px;
  background: #f5f6f7;
`;

const NoticeText = styled.div`
  display: flex;
  flex-direction: column;
  padding-bottom: 3px;
  line-height: 32px;
  color: #edecee;
`;

/* ---------- dock ---------- */
const Dock = styled.div`
  position: relative;
  align-self: center;
  width: 2651px;
  height: 154px;
  margin-top: 10px;
  padding-right: 2px;
  flex: none;
  display: flex;
  justify-content: center;
  border: 2px solid #565459;
  border-radius: 44px;
  background: linear-gradient(#28252a, #39363c);
`;

const Slot = styled.div`
  width: 132.7px;
  display: flex;
  flex-direction: column;
  align-items: center;
  padding-top: 20px;
`;

const AppIcon = styled.div`
  position: relative;
  width: 100px;
  height: 100px;
`;

const RunDot = styled.i`
  width: 8px;
  height: 8px;
  margin-top: 20px;
  border-radius: 50%;
  background: #b3b1b5;
`;

const DockLine = styled.i`
  width: 2px;
  height: 114px;
  margin: 18px 28.500px;
  background: #5d5b60;
`;

const Badge = styled.div`
  position: absolute;
  right: -14px;
  top: -11px;
  width: 46px;
  height: 46px;
  border-radius: 50%;
  display: flex;
  align-items: center;
  justify-content: center;
  background: #e04c3e;
`;

const Sq = ({ fill, children }) => (
  <svg width="100" height="100" viewBox="0 0 100 100">
    <rect width="100" height="100" rx="23" fill={fill} />
    {children}
  </svg>
);

const Hidden = styled.svg`
  position: absolute;
`;

const Defs = () => (
  <Hidden width="0" height="0">
    <defs>
      {[
        ["gBlue", "#5ac8fa", "#2f6ff0"], ["gSilver", "#eceef2", "#d0d8e4"], ["gKey", "#4a4a4c", "#050505"], ["gMat", "#3f6ee0", "#2148ae"],
        ["gRed", "#f0655c", "#d5554e"], ["gAtom", "#a5d78f", "#43a06c"], ["gMusic", "#ee6878", "#e93a42"], ["gGrey", "#d3dde3", "#8f8e8c"],
        ["gFire", "#ffd24f", "#f0325f"], ["gPurple", "#a23ff0", "#5a5fe0"], ["gTrash", "#6e7375", "#9a9ea0"], ["gYellow", "#fadb62", "#f5c02e"],
        ["gNote", "#faf9f7", "#e4e1db"], ["gArrow", "#dce8ee", "#7e8b93"], ["gB1", "#f08080", "#d03a46"], ["gB2", "#f7b858", "#e5702c"],
        ["gB3", "#7fe08c", "#4db63a"], ["gB4", "#6ec3fa", "#2f78ee"], ["gHex", "#4aa8e0", "#2672b2"], ["gIjA", "#fcc93b", "#f43b6c"],
        ["gIjB", "#38d4fb", "#2b74f0"], ["gAmber", "#fdd24a", "#e8672a"],
      ].map(([id, a, b]) => (
        <linearGradient key={id} id={id} x1="0" y1="0" x2="0" y2="1"><stop offset="0" stopColor={a} /><stop offset="1" stopColor={b} /></linearGradient>
      ))}
    </defs>
  </Hidden>
);

const Finder = () => (
  <Sq fill="url(#gBlue)">
    <path d="M55 0h22a23 23 0 0 1 23 23v54a23 23 0 0 1-23 23H63c-3-14-5-28-5-41H42c0-23 5-43 13-59z" fill="url(#gSilver)" />
    <path d="M27 30v7M74 30v7" stroke="#1d2a3a" strokeWidth="5" strokeLinecap="round" />
    <path d="M20 67c16 17 44 17 60 0" fill="none" stroke="#10161f" strokeWidth="4" strokeLinecap="round" />
  </Sq>
);
const Keychain = () => (
  <Sq fill="url(#gKey)">
    <circle cx="52" cy="24" r="15" fill="none" stroke="#8d8a80" strokeWidth="3.500" />
    <path d="M60 52l9 0 12 33-6 4-6-7zM24 66l10 4-4 18-7-4z" fill="#8e9291" />
    <ellipse cx="62" cy="45" rx="11" ry="14" fill="#b9c0c0" /><ellipse cx="51" cy="44" rx="10" ry="13" fill="#cbd6d6" /><path d="M47 52h8v36l-5 5-3-5z" fill="#9b9e9b" />
    <circle cx="30" cy="53" r="20.500" fill="#f28a2e" stroke="#e6cfae" strokeWidth="1.500" />
    <g fill="#fff" transform="rotate(18 30 54)"><rect x="21" y="50" width="16" height="12" rx="1.500" /><path d="M36 51v-4a4.500 4.500 0 0 1 9 0v3h-2.500v-3a2 2 0 0 0-4 0v4z" /></g>
  </Sq>
);
const ChromeApp = () => (
  <Sq fill="#f6f6f6">
    <circle cx="50" cy="50" r="43" fill="#4c9e53" />
    <path d="M12.800 28.500A43 43 0 0 1 87.200 28.500H50z" fill="#d94f3d" /><path d="M12.800 28.500L31.400 60.700 50 28.500z" fill="#d94f3d" />
    <path d="M87.200 28.500A43 43 0 0 1 50 93L68.600 60.700 50 28.500z" fill="#f3ba42" />
    <circle cx="50" cy="50" r="21.500" fill="#fff" /><circle cx="50" cy="50" r="17" fill="#3f7ee8" />
  </Sq>
);
const Firefox = () => (
  <Sq fill="#20133a">
    <path d="M7 55c0-12 5-20 10-25l5 7c0-7 1-12 5-17 1 8 5 13 12 16l12-2c-2-14 3-22 12-29 1 11 9 15 14 22l3-3c2 2 3 6 3 9l3-2c4 8 8 18 7 26-2 21-20 36-43 36S7 76 7 55z" fill="url(#gFire)" />
    <path d="M50 36c-2-14 3-24 12-32 1 12 11 18 19 26 9 14 9 28 3 39-8-3-12-12-12-22z" fill="#ffdb48" />
    <circle cx="50" cy="49" r="20" fill="url(#gPurple)" />
    <path d="M20 42c8-6 20-3 29 1-1 7-9 9-13 10-3 8 4 17 15 17-18 7-30-5-31-28z" fill="#fb7a38" />
    <path d="M10 66c8 18 30 24 50 16 12-5 20-15 22-27 4 25-13 37-32 37-20 0-36-11-40-26z" fill="#ed2d6e" opacity=".6" />
  </Sq>
);
const Terminal = () => (
  <Sq fill="url(#gGrey)">
    <rect x="4" y="4" width="92" height="92" rx="19" fill="#000" /><rect x="10" y="11" width="80" height="79" rx="14" fill="#262626" />
    <text x="16" y="34" fontFamily='"Liberation Mono", monospace' fontWeight="700" fontSize="25" fill="#fff">{">_"}</text>
  </Sq>
);
const Matter = () => (
  <Sq fill="url(#gMat)">
    <path d="M50 12C30 14 12 31 12 52c0 21 17 37 38 37s38-16 38-37c0-13-6-24-15-31 5 9 6 16 6 23 0 17-12 29-28 29S24 63 24 48c0-15 10-28 26-36z" fill="#f1f4fa" />
    <path d="M62 15c2 9 3 20 3 29 0 14-17 14-18 2 0-8 8-20 15-31z" fill="#f1f4fa" />
  </Sq>
);
const Calendar = () => (
  <Sq fill="#f7f6f4">
    <path d="M0 31V23A23 23 0 0 1 23 0h54a23 23 0 0 1 23 23v8z" fill="url(#gRed)" />
    <text x="50" y="24" textAnchor="middle" fontFamily={UI} fontWeight="600" fontSize="21" fill="#fff" textLength="41">DEC</text>
    <Ink t="18" x={20} y={40} w={58} h={45} weight={300} fill="#1f1f1f" />
  </Sq>
);
const Notes = () => (
  <Sq fill="url(#gNote)">
    <path d="M0 26V23A23 23 0 0 1 23 0h54a23 23 0 0 1 23 23v3z" fill="url(#gYellow)" />
    <path d="M0 26.500h100" stroke="#a9a69f" strokeWidth="2" /><path d="M3 31h95" stroke="#c2beb6" strokeWidth="2" strokeDasharray="1.500 2.500" />
    <path d="M0 50.500h100M0 75.500h100" stroke="#d3d1d3" strokeWidth="2" />
  </Sq>
);
const Numbers = () => (
  <svg width="100" height="104" viewBox="4 0 100 104">
    <path d="M2 58h104l2 44H0z" fill="#f2f1f2" />
    <path d="M8 62v32" stroke="#a9a9ad" strokeWidth="2" strokeDasharray="3 5" />
    <rect x="17" y="50" width="18" height="41" rx="2" fill="url(#gB1)" /><rect x="38" y="30" width="19" height="61" rx="2" fill="url(#gB2)" />
    <rect x="60" y="0" width="18" height="91" rx="2" fill="url(#gB3)" /><rect x="81" y="18" width="19" height="73" rx="2" fill="url(#gB4)" />
  </svg>
);
const Settings = () => (
  <Sq fill="url(#gGrey)">
    <circle cx="50" cy="50" r="43" fill="#2b2d2e" />
    <circle cx="50" cy="50" r="39" fill="none" stroke="#a9b0b3" strokeWidth="4" strokeDasharray="2 2.400" />
    <circle cx="50" cy="50" r="34" fill="none" stroke="#b9c0c3" strokeWidth="5" />
    <circle cx="50" cy="50" r="25" fill="#4c5052" stroke="#8a9092" strokeWidth="3" strokeDasharray="2 2" />
    <path d="M50 50h33M50 50L33.500 22M50 50L33.500 78" stroke="#c4cacc" strokeWidth="5" /><circle cx="50" cy="50" r="6" fill="#c4cacc" />
  </Sq>
);
const VpnApp = () => (
  <svg width="100" height="100" viewBox="0 0 100 100">
    <circle cx="49" cy="50" r="54" fill="#fafafa" />
    <path d="M33 82A37 37 0 1 1 65 82L61 64A20 20 0 1 0 37 64z" fill="#e58a3c" />
    <path d="M40 86l4-26a11.500 11.500 0 1 1 10 0l4 26z" fill="#1f3966" />
  </svg>
);
const Atom = () => (
  <Sq fill="url(#gAtom)">
    <g fill="none" stroke="#e6f4e8" strokeWidth="2.600">
      <ellipse cx="50" cy="50" rx="34" ry="12.500" transform="rotate(-8 50 50)" /><ellipse cx="50" cy="50" rx="34" ry="12.500" transform="rotate(52 50 50)" /><ellipse cx="50" cy="50" rx="34" ry="12.500" transform="rotate(112 50 50)" />
    </g>
    <circle cx="50" cy="50" r="4.200" fill="#e6f4e8" />
  </Sq>
);
const Idea = () => (
  <svg width="100" height="100" viewBox="6 6 100 100">
    <path d="M16 0l38 5 8 30-40 50-16-20-6-22z" fill="url(#gIjA)" /><path d="M78 2l34 28-2 66-44 16-20-24 20-60z" fill="url(#gIjB)" />
    <path d="M0 43l22-28v46zM34 5h20l8 30-40 6z" fill="#ec3fb0" opacity=".75" /><path d="M2 66l40-20 18 45-50 19z" fill="#b53af0" /><path d="M2 66l22-15v40l-10 18z" fill="#f4573a" />
    <path d="M78 2L66 30l46 0zM44 92l48-8-24 28z" fill="#48b6fb" opacity=".7" />
    <rect x="21" y="21" width="70" height="70" fill="#0d0508" />
    <text x="29" y="56" fontFamily='"Liberation Mono", monospace' fontWeight="700" fontSize="36" textLength="38" lengthAdjust="spacingAndGlyphs" fill="#fff">IJ</text>
    <path d="M30 77h27v5H30z" fill="#fff" />
  </svg>
);
const Music = () => (
  <Sq fill="url(#gMusic)">
    <path d="M36 23l36-8v53c0 6-5 9-10 9-6 0-9-4-9-8 0-6 5-9 10-9 2 0 3-1 3-3V31l-24 5v38c0 6-5 9-11 9-5 0-8-4-8-8 0-6 5-9 9-9 3 0 4-1 4-3z" fill="#fff" />
  </Sq>
);
const FirefoxDmg = () => (
  <svg width="100" height="100" viewBox="0 0 100 100">
    <circle cx="50" cy="62" r="43" fill="#5aa9e6" stroke="#d6d9ea" strokeWidth="3" />
    <path d="M9 66c2-12 10-20 17-26 9-7 18-8 24-8 12 0 24 8 30 18 6 5 11 10 11 18-2 24-19 35-41 35S10 90 9 66z" fill="url(#gAmber)" />
    <path d="M50 104c-2-24 6-40 28-52M46 103c-4-22-12-34-32-42M56 103c4-16 14-26 32-30M40 101c-2-10-10-20-24-22" stroke="#e06a28" strokeWidth="2.500" fill="none" />
    <path d="M40-11h20v25h10L50 36 30 14h10z" fill="url(#gArrow)" />
  </svg>
);
const PdfStack = () => (
  <svg width="100" height="100" viewBox="6 7 100 100">
    <path d="M24 0h38l4 6h34v12H24z" fill="#dfe0dc" /><path d="M3 12h8v101H4z" fill="#2a2a2a" /><path d="M8 6h97v108H8z" fill="#e6e6e1" />
    <rect x="11" y="6" width="11" height="32" fill="#c15c5b" /><Ink t="Nr.1" x={36} y={48} w={30} h={28} /><Ink t="FASS" x={37} y={43} w={12} h={4} weight={700} />
    <path d="M11 93h14v18H11z" fill="#555" /><path d="M64 104h26v5H64z" fill="#666" /><path d="M95 36v74" stroke="#c9a7a5" strokeWidth="2" strokeDasharray="6 3" />
    <path d="M78 6h27v34c-6 0-16 0-24-4-3-8-3-20-3-30z" fill="#f6f6f6" stroke="#cfcfcf" />
  </svg>
);
const MiniWindow = () => (
  <svg width="100" height="100" viewBox="9 4 100 100">
    <rect width="116" height="107" rx="2" fill="#302536" /><rect width="33" height="107" fill="#241c29" /><rect width="116" height="9" fill="#3a3340" />
    <circle cx="5" cy="5" r="1.500" fill="#ee6a5f" /><circle cx="9" cy="5" r="1.500" fill="#f5bd4f" /><circle cx="13" cy="5" r="1.500" fill="#61c454" />
    <circle cx="17" cy="22" r="8" fill="#77747a" /><circle cx="17" cy="20" r="3" fill="#fff" /><path d="M11 28c2-5 10-5 12 0z" fill="#fff" />
    <path d="M45 21h60" stroke="#d8d5da" strokeWidth="1.600" strokeDasharray="5 1" /><path d="M43 27h64M47 30h55M51 47h28M51 51h40" stroke="#8f8a93" strokeWidth="1.200" strokeDasharray="4 1" />
    <path d="M40 54l4-8 5 8z" fill="#f0c94a" /><rect x="96" y="45" width="14" height="4" fill="#6b6570" />
    <path d="M6 46h22" stroke="#4c4452" strokeWidth="5" /><path d="M8 46h18M8 51h20M8 57h20M8 63h20M8 72h14M8 77h20M8 86h16M8 92h10" stroke="#a7a2aa" strokeWidth="1.400" />
    <path d="M4 72h3M4 77h3" stroke="#3f86f0" strokeWidth="3" />
    <g transform="translate(76 72) scale(.38)"><rect width="100" height="100" rx="23" fill="#c5cdd0" /><circle cx="50" cy="50" r="38" fill="#333" /><circle cx="50" cy="50" r="30" fill="none" stroke="#c0c6c9" strokeWidth="7" /><path d="M50 50h28M50 50L36 25M50 50L36 75" stroke="#c4cacc" strokeWidth="6" /></g>
  </svg>
);
const Trash = () => (
  <svg width="100" height="100" viewBox="-3 9 100 100">
    <path d="M2 18l14 88c2 10 56 10 58 0L88 18z" fill="url(#gTrash)" /><path d="M22 30l8 70 10-4-4-62zM60 30l-3 60 8 6 6-62z" fill="#b2b6b8" opacity=".35" />
    <ellipse cx="45" cy="18" rx="43" ry="10" fill="#54585a" stroke="#a8acae" strokeWidth="2" />
    <path d="M8 18L20 3l12 5 8-6 10 8 8-8 14 8 10 8-8 10H16z" fill="#e9eaea" /><path d="M30 14l10-4 4 8-8 4z" fill="#58b7d6" /><path d="M54 12l12 4-6 8z" fill="#c8643c" /><path d="M20 8l8 14M50 8l-6 14M70 10l-6 14" stroke="#8d9092" strokeWidth="2" />
  </svg>
);

const DOCK = [
  [<Finder />, 1], [<Keychain />, 1], [<ChromeApp />, 1], [<Firefox />, 0], [<Terminal />, 1], [<Matter />, 1, "•"], [<Calendar />, 1], [<Notes />, 1],
  [<Numbers />, 0], [<Settings />, 1, "2"], [<VpnApp />, 1], [<Atom />, 1], [<Idea />, 1], null, [<Music />, 1], [<FirefoxDmg />, 1], [<Atom />, 0], null,
  [<PdfStack />, 0], [<MiniWindow />, 0], [<Trash />, 0],
];

export default function App() {
  return (
    <Screen>
      <Global />
      <Defs />
      <Behind>
        <Fit size={27}>16</Fit>
        <BehindRow><Checkbox /><Fit size={26}>Open</Fit></BehindRow>
      </Behind>
      <TopMenu />
      <ChromeWindow />
      <Dock>
        {DOCK.map((item, i) =>
          item === null ? (
            <DockLine key={i} />
          ) : (
            <Slot key={i}>
              <AppIcon>
                {item[0]}
                {item[2] && <Badge><Fit size={item[2] === "2" ? 26 : 14}>{item[2]}</Fit></Badge>}
              </AppIcon>
              {item[1] === 1 && <RunDot />}
            </Slot>
          )
        )}
      </Dock>
      <Notice>
        <NoticeIcon>
          <svg width="48" height="50" viewBox="0 0 25 28" fill="url(#gHex)"><path d="M0 7L11.500 0v6L5 10v8l-5 2.500zM13.500 0L25 7v13.500L20 18v-8l-6.500-4zM2 22l5-3 5.500 3 5.500-3 5 3-10.500 6z" /></svg>
        </NoticeIcon>
        <NoticeText>
          <Fit w={340} size={25.5} weight={600}>Software updates available</Fit>
          <Fit w={468} size={25.5}>Go to System Preferences to begin the</Fit>
          <Fit w={181} size={25.5}>install process.</Fit>
        </NoticeText>
      </Notice>
    </Screen>
  );
}
